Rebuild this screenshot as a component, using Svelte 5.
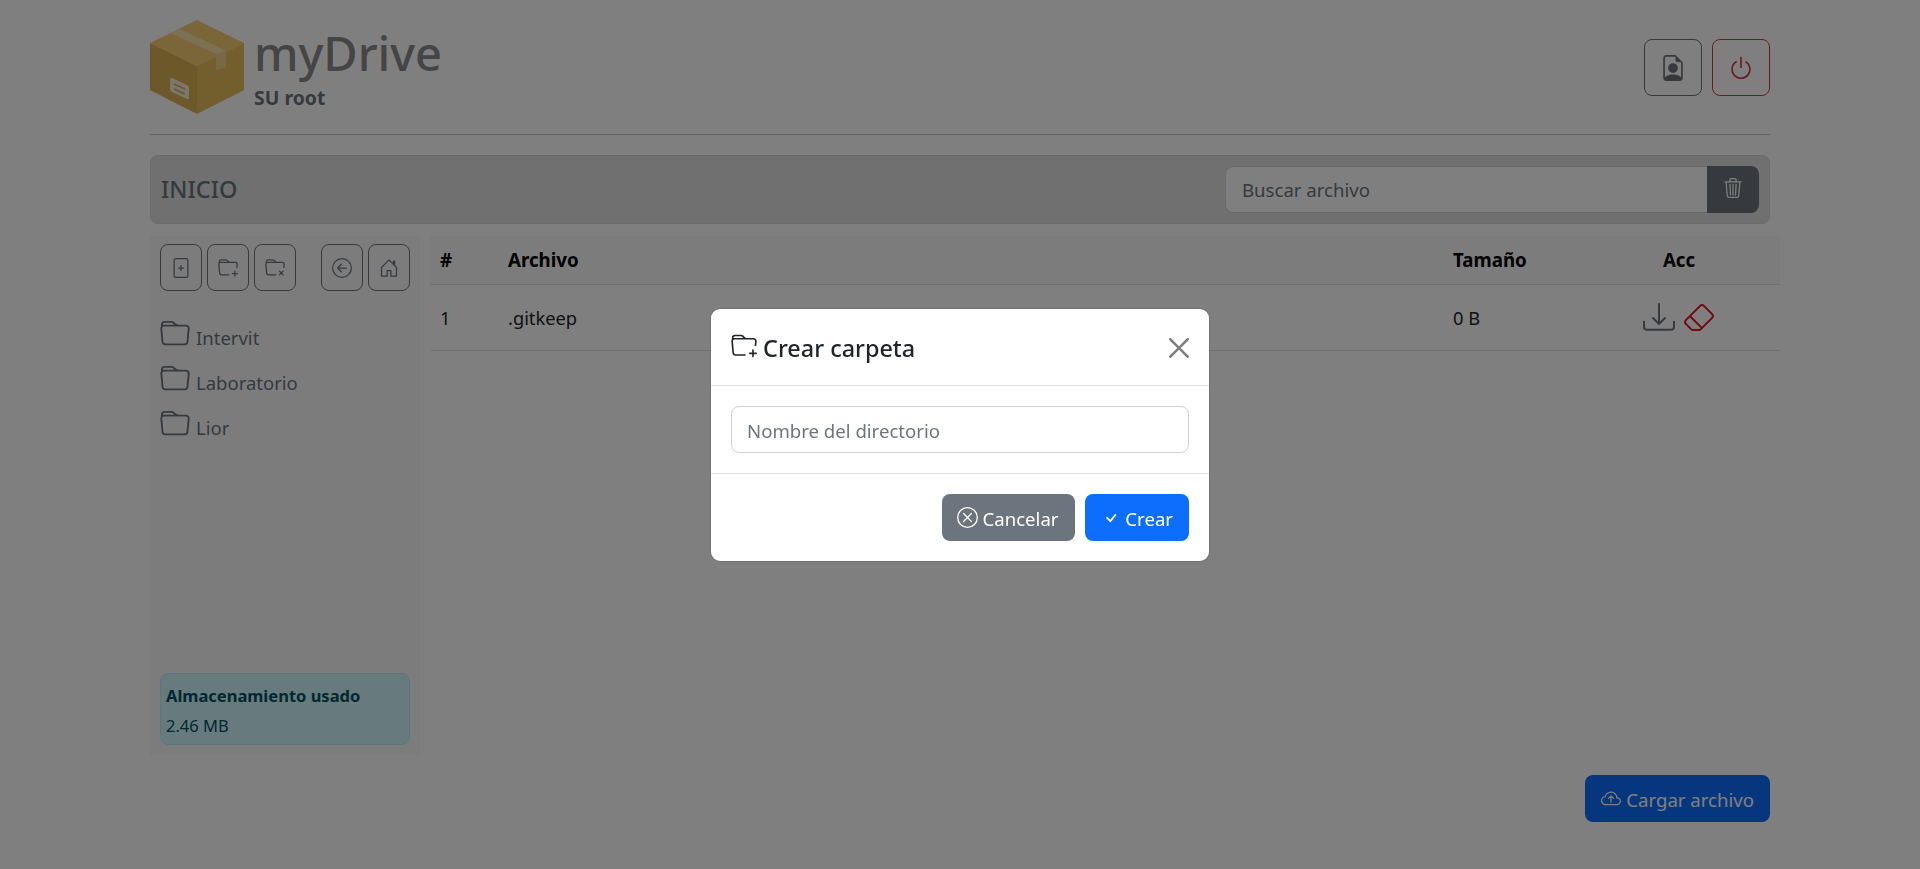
<script>
  const icons = {
    folder: ['M.54 3.87.5 3a2 2 0 0 1 2-2h3.672a2 2 0 0 1 1.414.586l.828.828A2 2 0 0 0 9.828 3h3.982a2 2 0 0 1 1.992 2.181l-.637 7A2 2 0 0 1 13.174 14H2.826a2 2 0 0 1-1.991-1.819l-.637-7a1.99 1.99 0 0 1 .342-1.31zM2.19 4a1 1 0 0 0-.996 1.09l.637 7a1 1 0 0 0 .995.91h10.348a1 1 0 0 0 .995-.91l.637-7A1 1 0 0 0 13.81 4H2.19zm4.69-1.707A1 1 0 0 0 6.172 2H2.5a1 1 0 0 0-1 .981l.006.139C1.72 3.042 1.95 3 2.19 3h5.396l-.707-.707z'],
    folderPlus: ['m.5 3 .04.87a1.99 1.99 0 0 0-.342 1.311l.637 7A2 2 0 0 0 2.826 14H9v-1H2.826a1 1 0 0 1-.995-.91l-.637-7A1 1 0 0 1 2.19 4h11.62a1 1 0 0 1 .996 1.09L14.54 8h1.005l.256-2.819A2 2 0 0 0 13.81 3H9.828a2 2 0 0 1-1.414-.586l-.828-.828A2 2 0 0 0 6.172 1H2.5a2 2 0 0 0-2 2zm5.672-1a1 1 0 0 1 .707.293L7.586 3H2.19c-.24 0-.47.042-.683.12L1.5 2.98a1 1 0 0 1 1-.98h3.672z', 'M13.5 10a.5.5 0 0 1 .5.5V12h1.5a.5.5 0 1 1 0 1H14v1.5a.5.5 0 1 1-1 0V13h-1.5a.5.5 0 0 1 0-1H13v-1.5a.5.5 0 0 1 .5-.5z'],
    folderX: ['M.54 3.87.5 3a2 2 0 0 1 2-2h3.672a2 2 0 0 1 1.414.586l.828.828A2 2 0 0 0 9.828 3h3.982a2 2 0 0 1 1.992 2.181L15.546 8H14.54l.265-2.91A1 1 0 0 0 13.81 4H2.19a1 1 0 0 0-.996 1.09l.637 7a1 1 0 0 0 .995.91H9v1H2.826a2 2 0 0 1-1.991-1.819l-.637-7a1.99 1.99 0 0 1 .342-1.31zm6.339-1.577A1 1 0 0 0 6.172 2H2.5a1 1 0 0 0-1 .981l.006.139C1.72 3.042 1.95 3 2.19 3h5.396l-.707-.707z', 'M11.854 10.146a.5.5 0 0 0-.707.708L12.293 12l-1.146 1.146a.5.5 0 0 0 .707.708L13 12.707l1.146 1.147a.5.5 0 0 0 .708-.708L13.707 12l1.147-1.146a.5.5 0 0 0-.707-.708L13 11.293l-1.146-1.147z'],
    filePlus: ['M8.5 6a.5.5 0 0 0-1 0v1.5H6a.5.5 0 0 0 0 1h1.5V10a.5.5 0 0 0 1 0V8.5H10a.5.5 0 0 0 0-1H8.5V6z', 'M2 2a2 2 0 0 1 2-2h8a2 2 0 0 1 2 2v12a2 2 0 0 1-2 2H4a2 2 0 0 1-2-2V2zm10-1H4a1 1 0 0 0-1 1v12a1 1 0 0 0 1 1h8a1 1 0 0 0 1-1V2a1 1 0 0 0-1-1z'],
    back: ['M1 8a7 7 0 1 0 14 0A7 7 0 0 0 1 8zm15 0A8 8 0 1 1 0 8a8 8 0 0 1 16 0zm-4.5-.5a.5.5 0 0 1 0 1H5.707l2.147 2.146a.5.5 0 0 1-.708.708l-3-3a.5.5 0 0 1 0-.708l3-3a.5.5 0 1 1 .708.708L5.707 7.5H11.5z'],
    home: ['M8.354 1.146a.5.5 0 0 0-.708 0l-6 6A.5.5 0 0 0 1.5 7.5v7a.5.5 0 0 0 .5.5h4.5a.5.5 0 0 0 .5-.5v-4h2v4a.5.5 0 0 0 .5.5H14a.5.5 0 0 0 .5-.5v-7a.5.5 0 0 0-.146-.354L13 5.793V2.5a.5.5 0 0 0-.5-.5h-1a.5.5 0 0 0-.5.5v1.293L8.354 1.146zM2.5 14V7.707l5.5-5.5 5.5 5.5V14H10v-4a.5.5 0 0 0-.5-.5h-3a.5.5 0 0 0-.5.5v4H2.5z'],
    power: ['M7.5 1v7h1V1h-1z', 'M3 8.812a4.999 4.999 0 0 1 2.578-4.375l-.485-.874A6 6 0 1 0 11 3.616l-.501.865A5 5 0 1 1 3 8.812z'],
    person: ['M11 8a3 3 0 1 1-6 0 3 3 0 0 1 6 0z', 'M14 14V4.5L9.5 0H4a2 2 0 0 0-2 2v12a2 2 0 0 0 2 2h8a2 2 0 0 0 2-2zM9.5 3A1.5 1.5 0 0 0 11 4.5h2v9.255S12 12 8 12s-5 1.755-5 1.755V2a1 1 0 0 1 1-1h5.5v2z'],
    trash: ['M6.5 1h3a.5.5 0 0 1 .5.5v1H6v-1a.5.5 0 0 1 .5-.5ZM11 2.5v-1A1.5 1.5 0 0 0 9.5 0h-3A1.5 1.5 0 0 0 5 1.5v1H2.506a.58.58 0 0 0-.01 0H1.5a.5.5 0 0 0 0 1h.538l.853 10.66A2 2 0 0 0 4.885 16h6.23a2 2 0 0 0 1.994-1.84l.853-10.66h.538a.5.5 0 0 0 0-1h-.995a.59.59 0 0 0-.01 0H11Zm1.958 1-.846 10.58a1 1 0 0 1-.997.92h-6.23a1 1 0 0 1-.997-.92L3.042 3.5h9.916Zm-7.487 1a.5.5 0 0 1 .528.47l.5 8.5a.5.5 0 0 1-.998.06L5 5.03a.5.5 0 0 1 .47-.53Zm5.058 0a.5.5 0 0 1 .47.53l-.5 8.5a.5.5 0 1 1-.998-.06l.5-8.5a.5.5 0 0 1 .528-.47ZM8 4.5a.5.5 0 0 1 .5.5v8.5a.5.5 0 0 1-1 0V5a.5.5 0 0 1 .5-.5Z'],
    download: ['M.5 9.9a.5.5 0 0 1 .5.5v2.5a1 1 0 0 0 1 1h12a1 1 0 0 0 1-1v-2.5a.5.5 0 0 1 1 0v2.5a2 2 0 0 1-2 2H2a2 2 0 0 1-2-2v-2.5a.5.5 0 0 1 .5-.5z', 'M7.646 11.854a.5.5 0 0 0 .708 0l3-3a.5.5 0 0 0-.708-.708L8.5 10.293V1.5a.5.5 0 0 0-1 0v8.793L5.354 8.146a.5.5 0 1 0-.708.708l3 3z'],
    eraser: ['M8.086 2.207a2 2 0 0 1 2.828 0l3.879 3.879a2 2 0 0 1 0 2.828l-5.5 5.5A2 2 0 0 1 7.879 15H5.12a2 2 0 0 1-1.414-.586l-2.5-2.5a2 2 0 0 1 0-2.828l6.879-6.879zm2.121.707a1 1 0 0 0-1.414 0L4.16 7.547l5.293 5.293 4.633-4.633a1 1 0 0 0 0-1.414l-3.879-3.879zM8.746 13.547 3.453 8.254 1.914 9.793a1 1 0 0 0 0 1.414l2.5 2.5a1 1 0 0 0 .707.293H7.88a1 1 0 0 0 .707-.293l.16-.16z'],
    xCircle: ['M8 15A7 7 0 1 1 8 1a7 7 0 0 1 0 14zm0 1A8 8 0 1 0 8 0a8 8 0 0 0 0 16z', 'M4.646 4.646a.5.5 0 0 1 .708 0L8 7.293l2.646-2.647a.5.5 0 0 1 .708.708L8.707 8l2.647 2.646a.5.5 0 0 1-.708.708L8 8.707l-2.646 2.647a.5.5 0 0 1-.708-.708L7.293 8 4.646 5.354a.5.5 0 0 1 0-.708z'],
    check: ['M10.97 4.97a.75.75 0 0 1 1.07 1.05l-3.99 4.99a.75.75 0 0 1-1.08.02L4.324 8.384a.75.75 0 1 1 1.06-1.06l2.094 2.093 3.473-4.425a.267.267 0 0 1 .02-.022z'],
    cloud: ['M7.646 5.146a.5.5 0 0 1 .708 0l2 2a.5.5 0 0 1-.708.708L8.5 6.707V10.5a.5.5 0 0 1-1 0V6.707L6.354 7.854a.5.5 0 1 1-.708-.708l2-2z', 'M4.406 3.342A5.53 5.53 0 0 1 8 2c2.69 0 4.923 2 5.166 4.579C14.758 6.804 16 8.137 16 9.773 16 11.569 14.502 13 12.687 13H3.781C1.708 13 0 11.366 0 9.318c0-1.763 1.266-3.223 2.942-3.593.143-.863.698-1.723 1.464-2.383zm.653.757c-.757.653-1.153 1.44-1.153 2.056v.448l-.445.049C2.064 6.805 1 7.952 1 9.318 1 10.785 2.23 12 3.781 12h8.906C13.98 12 15 10.988 15 9.773c0-1.216-1.02-2.228-2.313-2.228h-.5v-.5C12.188 4.825 10.328 3 8 3a4.53 4.53 0 0 0-2.941 1.1z'],
    close: ['M.293.293a1 1 0 0 1 1.414 0L8 6.586 14.293.293a1 1 0 1 1 1.414 1.414L9.414 8l6.293 6.293a1 1 0 0 1-1.414 1.414L8 9.414l-6.293 6.293a1 1 0 0 1-1.414-1.414L6.586 8 .293 1.707a1 1 0 0 1 0-1.414z']
  };

  const folders = ['Intervit', 'Laboratorio', 'Lior'];
  const files = [{ n: 1, name: '.gitkeep', size: '0 B' }];
</script>

{#snippet icon(name, size)}
  <svg class="bi" width={size} height={size} viewBox="0 0 16 16" fill="currentColor" aria-hidden="true">
    {#each icons[name] as d}<path {d} />{/each}
  </svg>
{/snippet}

<div class="page">
  <header class="top">
    <svg class="logo" width="94" height="94" viewBox="0 0 94 94" aria-hidden="true">
      <polygon points="47,0 94,23 47,46 0,23" fill="#f6cc72" />
      <polygon points="0,23 47,46 47,94 0,70" fill="#dab052" />
      <polygon points="94,23 47,46 47,94 94,70" fill="#e6bc5a" />
      <polygon points="20,13 30,9 76,31 76,47 66,50 66,34" fill="#fbe2a8" />
      <polygon points="66,34 76,31 76,47 66,50" fill="#f0d088" />
      <path d="M22 58 L37 65 Q39 66 39 68 L39 77 Q39 80 37 79 L22 72 Q20 71 20 69 L20 60 Q20 57 22 58 Z" fill="#f8efdc" />
      <line x1="24" y1="64" x2="35" y2="69" stroke="#dab052" stroke-width="1.6" />
      <line x1="24" y1="69" x2="35" y2="74" stroke="#dab052" stroke-width="1.6" />
    </svg>
    <div class="brand">
      <div class="name">myDrive</div>
      <div class="user">SU root</div>
    </div>
    <div class="top-actions">
      <button class="tool big">{@render icon('person', 26)}</button>
      <button class="tool big danger">{@render icon('power', 26)}</button>
    </div>
  </header>
  <hr />

  <section class="bar">
    <h2>INICIO</h2>
    <div class="search">
      <input type="text" placeholder="Buscar archivo" />
      <button>{@render icon('trash', 20)}</button>
    </div>
  </section>

  <div class="main">
    <aside class="side">
      <div class="tools">
        <button class="tool">{@render icon('filePlus', 20)}</button>
        <button class="tool">{@render icon('folderPlus', 20)}</button>
        <button class="tool">{@render icon('folderX', 20)}</button>
        <span class="gap"></span>
        <button class="tool">{@render icon('back', 20)}</button>
        <button class="tool">{@render icon('home', 20)}</button>
      </div>
      <ul class="folders">
        {#each folders as f}
          <li>{@render icon('folder', 30)}<span>{f}</span></li>
        {/each}
      </ul>
      <div class="usage">
        <strong>Almacenamiento usado</strong>
        <span>2.46 MB</span>
      </div>
    </aside>

    <table>
      <thead>
        <tr><th class="c-n">#</th><th>Archivo</th><th class="c-s">Tamaño</th><th class="c-a">Acc</th></tr>
      </thead>
      <tbody>
        {#each files as file}
          <tr>
            <td>{file.n}</td>
            <td>{file.name}</td>
            <td>{file.size}</td>
            <td class="acts">
              <span class="dl">{@render icon('download', 32)}</span>
              <span class="er">{@render icon('eraser', 32)}</span>
            </td>
          </tr>
        {/each}
      </tbody>
    </table>
  </div>

  <div class="bottom">
    <button class="primary">{@render icon('cloud', 20)} Cargar archivo</button>
  </div>
</div>

<div class="backdrop"></div>
<div class="modal-wrap">
  <div class="modal">
    <div class="m-head">
      <h5>{@render icon('folderPlus', 26)} Crear carpeta</h5>
      <button class="close">{@render icon('close', 20)}</button>
    </div>
    <div class="m-body">
      <input type="text" placeholder="Nombre del directorio" />
    </div>
    <div class="m-foot">
      <button class="secondary">{@render icon('xCircle', 21)} Cancelar</button>
      <button class="primary">{@render icon('check', 20)} Crear</button>
    </div>
  </div>
</div>

<style>
  :global(body) {
    margin: 0;
    background: #fff;
    color: #212529;
    font-family: "Noto Sans", "Open Sans", sans-serif;
    font-size: 18px;
  }

  .bi { vertical-align: -0.125em; }

  button { font-family: inherit; cursor: pointer; }

  .page {
    padding: 20px 150px 0;
    height: 849px;
    overflow: hidden;
  }

  .top {
    display: flex;
    align-items: flex-start;
    height: 94px;
  }

  .logo { flex: none; }

  .brand { margin-left: 10px; }

  .name {
    font-size: 47px;
    font-weight: 500;
    line-height: 56px;
    margin-top: 5px;
    color: #8b8b8b;
  }

  .user {
    font-size: 19.4px;
    font-weight: 700;
    line-height: 24px;
    margin-top: 5px;
    color: #6c757d;
  }

  .top-actions {
    margin-left: auto;
    display: flex;
    gap: 10px;
    margin-top: 19px;
  }

  .tool {
    flex: none;
    width: 42px;
    height: 47px;
    padding: 0;
    background: transparent;
    border: 1px solid #6c757d;
    border-radius: 8px;
    color: #6c757d;
    display: flex;
    align-items: center;
    justify-content: center;
  }

  .tool.big { width: 58px; height: 57px; }

  .tool.danger { border-color: #dc3545; color: #dc3545; }

  hr {
    margin: 20px 0;
    border: 0;
    border-top: 1px solid #c6c6c6;
  }

  .bar {
    height: 69px;
    box-sizing: border-box;
    padding: 0 10px;
    display: flex;
    align-items: center;
    justify-content: space-between;
    background: #e0e0e0;
    border: 1px solid #d5d5d5;
    border-radius: 8px;
  }

  h2 {
    margin: 0 0 2px;
    font-size: 23.5px;
    font-weight: 500;
    color: #6c757d;
  }

  .search { display: flex; width: 534px; height: 47px; }

  .search input {
    flex: 1;
    min-width: 0;
    box-sizing: border-box;
    padding: 0 16px;
    font: inherit;
    font-size: 18.6px;
    border: 1px solid #ced4da;
    border-right: 0;
    border-radius: 8px 0 0 8px;
    background: #fff;
    outline: none;
  }

  input::placeholder { color: #6c757d; opacity: 1; }

  .search button {
    width: 52px;
    border: 0;
    border-radius: 0 8px 8px 0;
    background: #6c757d;
    color: #fff;
    padding: 0;
  }

  .main {
    display: flex;
    gap: 10px;
    margin-top: 12px;
    margin-right: -10px;
  }

  .side {
    flex: none;
    width: 270px;
    height: 519px;
    box-sizing: border-box;
    padding: 8px 10px 10px;
    background: #f8f9fa;
    display: flex;
    flex-direction: column;
  }

  .tools { display: flex; gap: 5px; }

  .gap { width: 15px; }

  .folders {
    list-style: none;
    margin: 13px 0 0;
    padding: 0;
    color: #6c757d;
    font-size: 18.5px;
  }

  .folders li {
    height: 45px;
    display: flex;
    align-items: flex-end;
    gap: 6px;
  }

  .folders li span { position: relative; top: 1px; }

  .usage {
    margin-top: auto;
    box-sizing: border-box;
    height: 72px;
    padding: 10px 5px;
    background: #cff4fc;
    border: 1px solid #b6effb;
    border-radius: 8px;
    color: #055160;
    display: flex;
    flex-direction: column;
    gap: 7px;
    font-size: 16.5px;
  }

  table {
    flex: 1;
    align-self: flex-start;
    border-collapse: collapse;
    font-size: 18.3px;
  }

  th {
    height: 48px;
    padding: 0 10px 1px;
    box-sizing: border-box;
    text-align: left;
    background: #f8f9fa;
    color: #000;
    font-size: 18.7px;
    font-weight: 700;
    border-bottom: 1px solid #dee2e6;
  }

  td {
    height: 65px;
    padding: 0 10px;
    border-bottom: 1px solid #dee2e6;
  }

  .c-n { width: 68px; }
  .c-s { width: 135px; }
  .c-a { width: 202px; text-align: center; }

  .acts { color: #6c757d; text-align: center; }
  .acts span { display: inline-block; position: relative; top: 1px; }
  .er { color: #e6101e; margin-left: 3px; }

  .bottom {
    display: flex;
    justify-content: flex-end;
    margin-top: 20px;
  }

  .primary, .secondary {
    height: 47px;
    padding: 2px 16px 0;
    border: 0;
    border-radius: 8px;
    color: #fff;
    font-size: 18.6px;
    white-space: nowrap;
  }

  .primary { background: #0d6efd; }
  .secondary { background: #6c757d; padding-left: 15px; }

  .backdrop {
    position: fixed;
    inset: 0;
    background: rgba(0, 0, 0, 0.5);
  }

  .modal-wrap {
    position: fixed;
    inset: 0;
    display: flex;
    align-items: center;
    justify-content: center;
  }

  .modal {
    width: 500px;
    box-sizing: border-box;
    background: #fff;
    border: 1px solid rgba(0, 0, 0, 0.1);
    border-radius: 10px;
    background-clip: padding-box;
  }

  .m-head {
    height: 77px;
    box-sizing: border-box;
    padding: 0 20px;
    display: flex;
    align-items: center;
    justify-content: space-between;
    border-bottom: 1px solid #dee2e6;
  }

  h5 {
    margin: 0;
    padding-top: 2px;
    font-size: 23.4px;
    font-weight: 500;
  }

  .close {
    border: 0;
    background: none;
    padding: 2px 0 0;
    color: #000;
    opacity: 0.5;
    display: flex;
  }

  .m-body {
    padding: 20px;
    border-bottom: 1px solid #dee2e6;
  }

  .m-body input {
    display: block;
    width: 100%;
    height: 47px;
    box-sizing: border-box;
    padding: 2px 15px 0;
    font: inherit;
    font-size: 18.6px;
    border: 1px solid #ced4da;
    border-radius: 8px;
    outline: none;
  }

  .m-foot {
    padding: 20px;
    display: flex;
    justify-content: flex-end;
    gap: 10px;
  }
</style>
